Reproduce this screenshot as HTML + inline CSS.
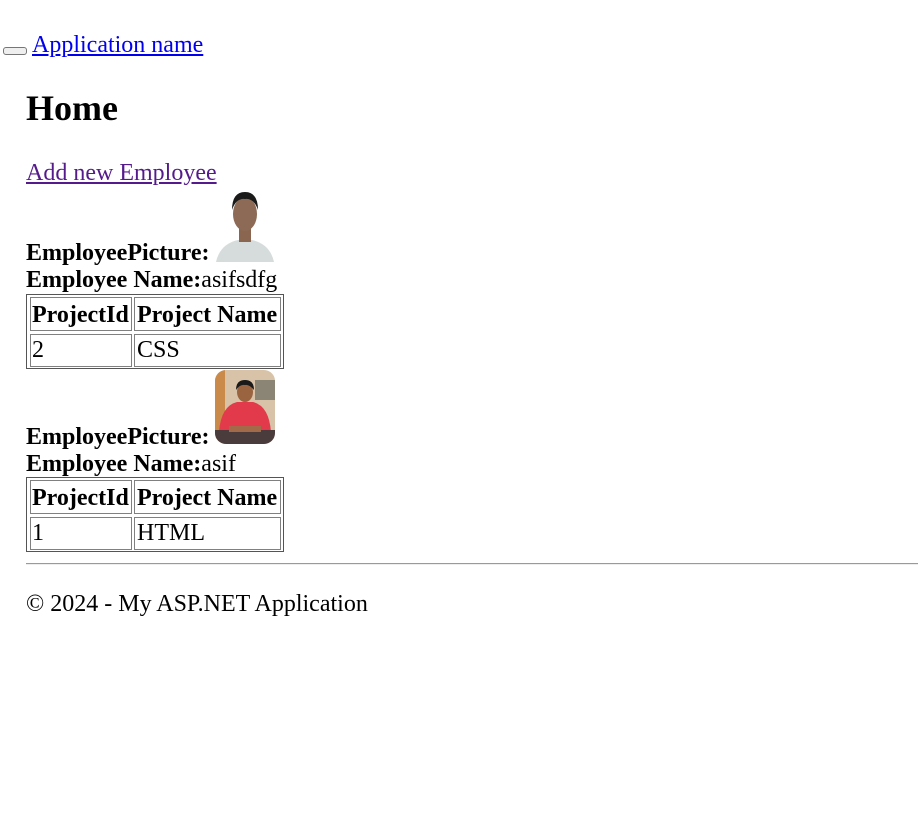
<!DOCTYPE html>
<html><head><style>
body{margin:0;background:#fff;font-family:"Liberation Serif",serif;font-size:24px;color:#000;}
.a{position:absolute;white-space:nowrap;line-height:27px;}
a{color:#00e;}
.cell{position:absolute;border:1px solid #808080;box-sizing:border-box;}
.tb{position:absolute;border:1px solid #555;box-sizing:border-box;}
.t{position:absolute;line-height:27px;white-space:nowrap;}
</style></head><body>
<div style="position:absolute;left:3px;top:47px;width:24px;height:8px;border:1px solid #767676;border-radius:3px;background:#efefef;box-sizing:border-box"></div>
<div class="a" style="left:32px;top:32px"><a href="#">Application name</a></div>
<div class="a" style="left:26px;top:88px;font-size:36px;font-weight:bold;line-height:41px">Home</div>
<div class="a" style="left:26px;top:160px"><a href="#" style="color:#551a8b">Add new Employee</a></div>

<div class="a" style="left:26px;top:240px"><b>EmployeePicture:</b></div>
<svg style="position:absolute;left:216px;top:188px" width="58" height="74" viewBox="0 0 58 74">
<path d="M0 74 Q4 56 22 52 L36 52 Q54 56 58 74Z" fill="#d6dcdc"/>
<rect x="23" y="40" width="12" height="14" fill="#8a6650"/>
<ellipse cx="29" cy="26" rx="12" ry="17" fill="#8d6a55"/>
<path d="M16 22 Q16 4 29 4 Q42 4 42 22 Q38 10 29 11 Q20 10 16 22Z" fill="#1a1a1a"/>
</svg>
<div class="a" style="left:26px;top:267px"><b>Employee Name:</b>asifsdfg</div>
<div class="tb" style="left:26px;top:294px;width:258px;height:75px"></div>
<div class="cell" style="left:30px;top:297px;width:102px;height:34px"></div>
<div class="cell" style="left:134px;top:297px;width:147px;height:34px"></div>
<div class="cell" style="left:30px;top:334px;width:102px;height:33px"></div>
<div class="cell" style="left:134px;top:334px;width:147px;height:33px"></div>
<div class="t" style="left:32px;top:302px;font-weight:bold">ProjectId</div>
<div class="t" style="left:137px;top:302px;font-weight:bold">Project Name</div>
<div class="t" style="left:32px;top:337px">2</div>
<div class="t" style="left:137px;top:337px">CSS</div>

<svg style="position:absolute;left:215px;top:370px" width="60" height="74" viewBox="0 0 60 74">
<defs><clipPath id="c"><rect width="60" height="74" rx="11"/></clipPath></defs>
<g clip-path="url(#c)">
<rect width="60" height="74" fill="#d8c3a8"/>
<rect x="0" y="0" width="10" height="74" fill="#c98a4a"/>
<rect x="40" y="10" width="20" height="20" fill="#8a8575"/>
<path d="M4 62 Q6 36 22 32 L38 32 Q54 36 56 62Z" fill="#e23a4a"/>
<ellipse cx="30" cy="22" rx="8" ry="10" fill="#9a6440"/>
<path d="M21 20 Q21 10 30 10 Q39 10 39 20 Q34 14 30 15 Q25 14 21 20Z" fill="#1a1a1a"/>
<rect x="0" y="60" width="60" height="14" fill="#4a3c3c"/>
<rect x="14" y="56" width="32" height="6" fill="#a26a48"/>
</g></svg>
<div class="a" style="left:26px;top:424px"><b>EmployeePicture:</b></div>
<div class="a" style="left:26px;top:451px"><b>Employee Name:</b>asif</div>
<div class="tb" style="left:26px;top:477px;width:258px;height:75px"></div>
<div class="cell" style="left:30px;top:480px;width:102px;height:34px"></div>
<div class="cell" style="left:134px;top:480px;width:147px;height:34px"></div>
<div class="cell" style="left:30px;top:517px;width:102px;height:33px"></div>
<div class="cell" style="left:134px;top:517px;width:147px;height:33px"></div>
<div class="t" style="left:32px;top:485px;font-weight:bold">ProjectId</div>
<div class="t" style="left:137px;top:485px;font-weight:bold">Project Name</div>
<div class="t" style="left:32px;top:520px">1</div>
<div class="t" style="left:137px;top:520px">HTML</div>

<div style="position:absolute;left:26px;top:563px;width:892px;height:0;border-top:1px solid #9a9a9a;border-bottom:1px solid #eee"></div>
<div class="a" style="left:26px;top:591px">© 2024 - My ASP.NET Application</div>
</body></html>
